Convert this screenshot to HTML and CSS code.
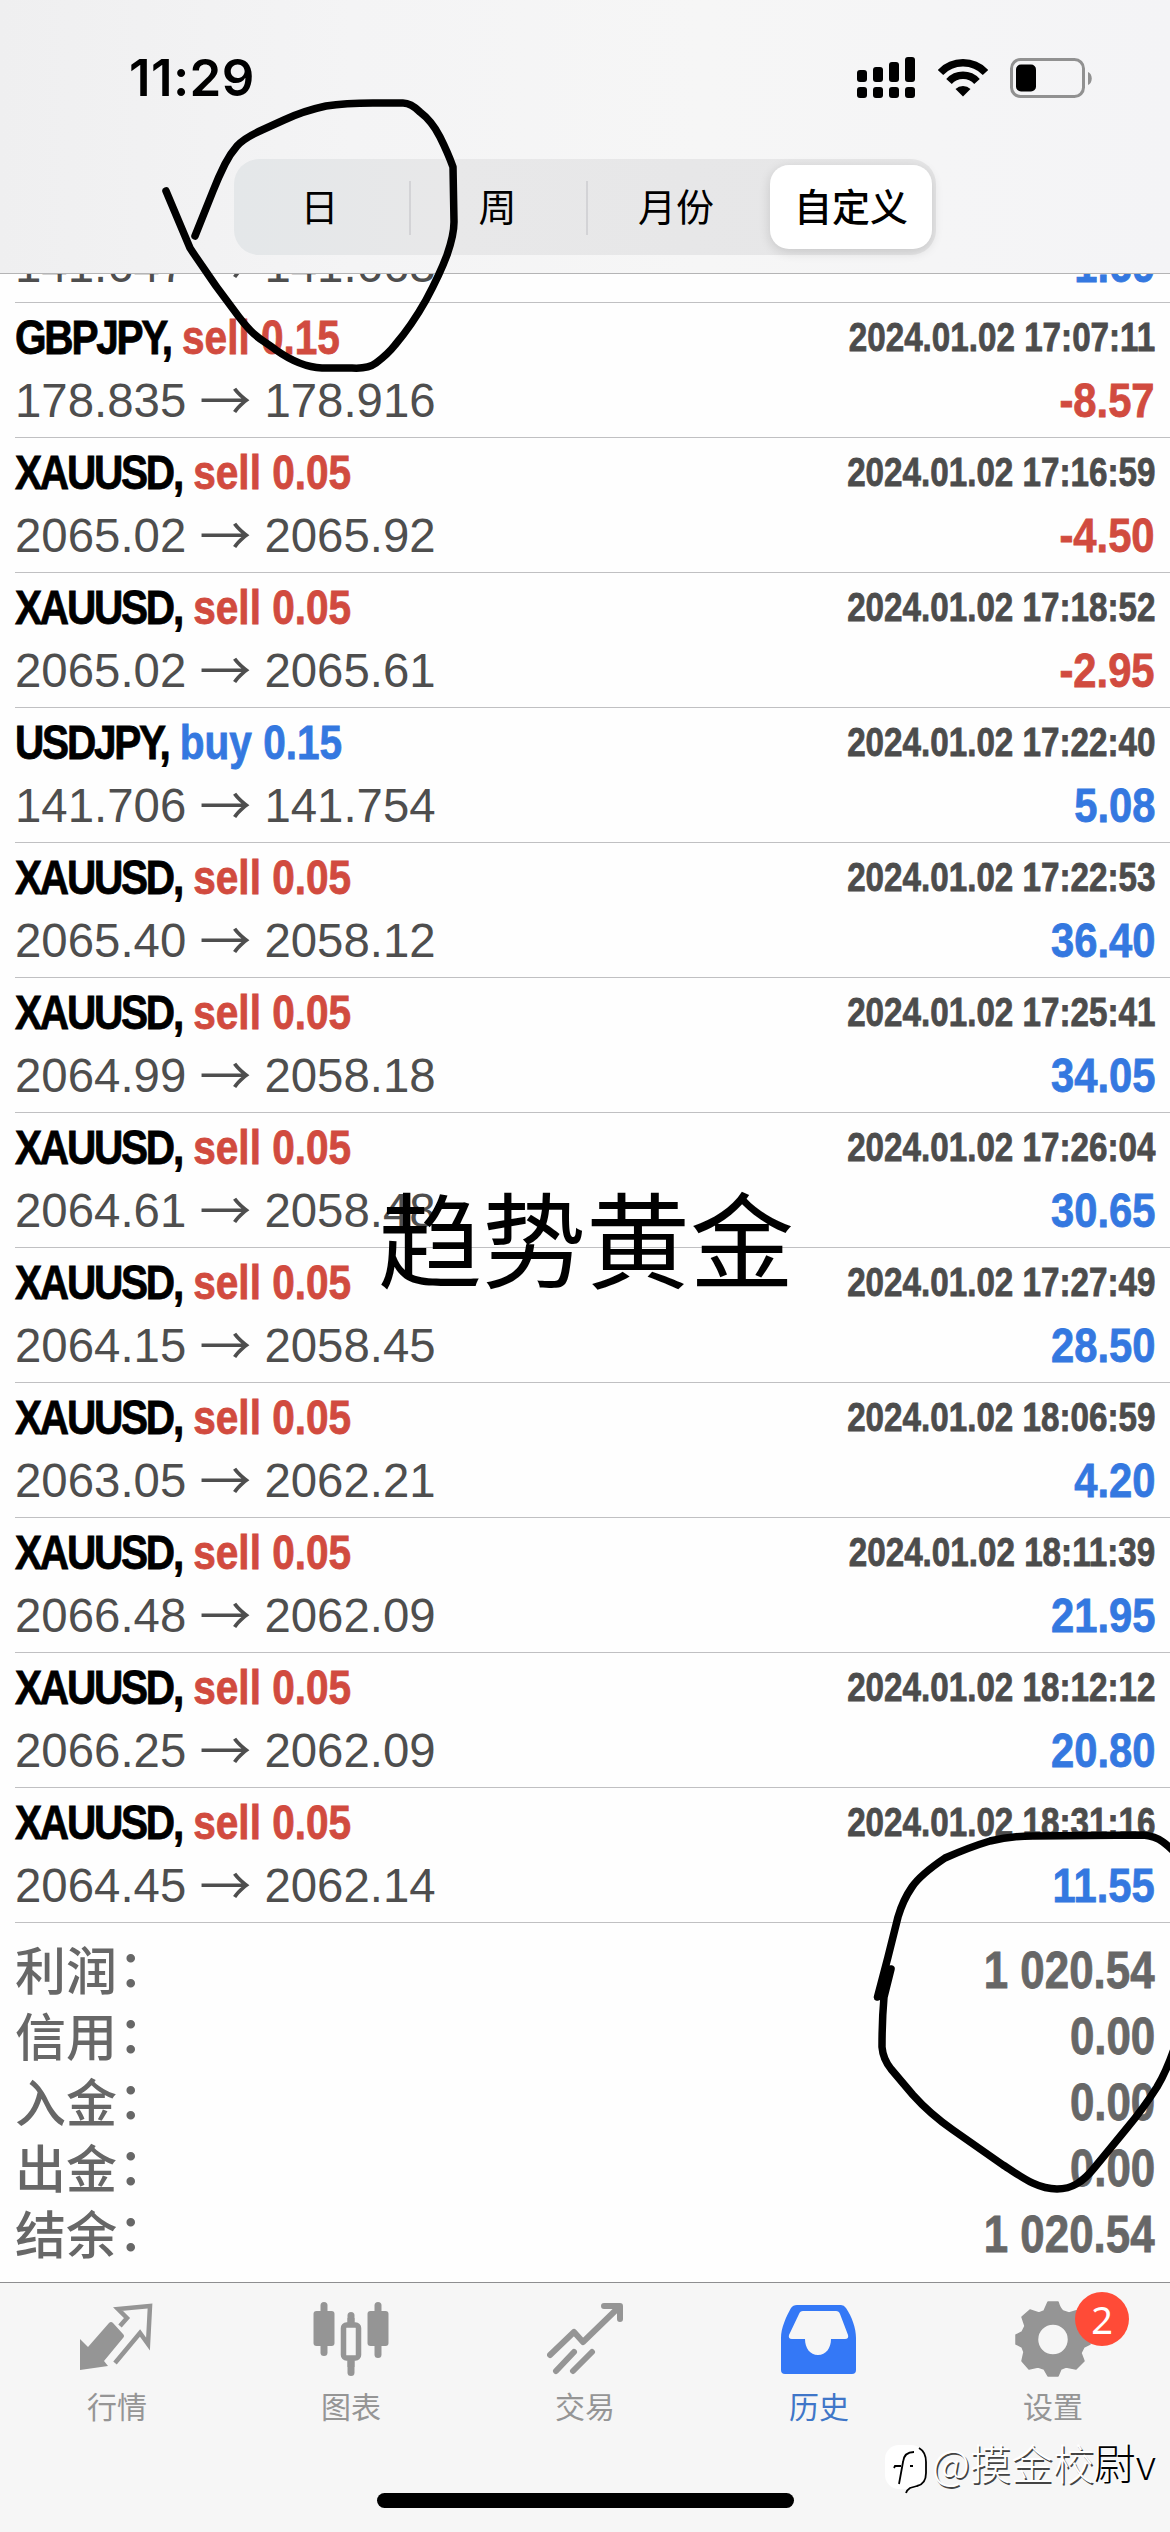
FILE: index.html
```html
<!DOCTYPE html>
<html lang="zh-CN">
<head>
<meta charset="utf-8">
<title>历史</title>
<link rel="stylesheet" href="styles.css">
</head>
<body>
<div class="screen">
  <header class="header">
    <div class="status">
      <span class="clock">11:29</span>
      <div class="status-icons">
        <svg class="signal" width="58" height="42" viewBox="0 0 58 42">
          <rect x="0" y="13" width="10" height="12" rx="3"/><rect x="16" y="10" width="10" height="15" rx="3"/><rect x="32" y="5" width="10" height="20" rx="3"/><rect x="48" y="0" width="10" height="25" rx="3"/>
          <rect x="0" y="30" width="10" height="11" rx="3"/><rect x="16" y="30" width="10" height="11" rx="3"/><rect x="32" y="30" width="10" height="11" rx="3"/><rect x="48" y="30" width="10" height="11" rx="3"/>
        </svg>
        <svg class="wifi" width="50" height="38" viewBox="0 0 50 38">
          <path d="M2.500 13.500A31 31 0 0 1 47.500 13.500M11 22.500A19 19 0 0 1 39 22.500" fill="none" stroke="#000" stroke-width="7.500"/>
          <path d="M25 37.500L17.500 30A11 11 0 0 1 32.500 30Z"/>
        </svg>
        <svg class="battery" width="82" height="40" viewBox="0 0 82 40">
          <rect x="1.500" y="1.500" width="72" height="37" rx="9" fill="none" stroke="#919191" stroke-width="3"/>
          <rect x="6" y="6.500" width="20" height="27" rx="5"/>
          <path d="M78 14c5 2 5 11 0 13z" fill="#919191"/>
        </svg>
      </div>
    </div>
    <nav class="segments">
      <span class="segment">日</span>
      <span class="segment ruled">周</span>
      <span class="segment ruled">月份</span>
      <span class="segment selected">自定义</span>
    </nav>
  </header>

  <main class="history">
    <ul class="deals">
      <li class="deal"><p class="deal-top"><span class="narrow"><b class="symbol">USDJPY,</b> <b class="buy">buy 0.15</b></span><time class="narrow time">2024.01.02 17:05:22</time></p><p class="deal-bottom"><span class="prices">141.647 <i class="arrow">→</i> 141.663</span><b class="narrow profit buy">1.69</b></p></li>
      <li class="deal"><p class="deal-top"><span class="narrow"><b class="symbol">GBPJPY,</b> <b class="sell">sell 0.15</b></span><time class="narrow time">2024.01.02 17:07:11</time></p><p class="deal-bottom"><span class="prices">178.835 <i class="arrow">→</i> 178.916</span><b class="narrow profit sell">-8.57</b></p></li>
      <li class="deal"><p class="deal-top"><span class="narrow"><b class="symbol">XAUUSD,</b> <b class="sell">sell 0.05</b></span><time class="narrow time">2024.01.02 17:16:59</time></p><p class="deal-bottom"><span class="prices">2065.02 <i class="arrow">→</i> 2065.92</span><b class="narrow profit sell">-4.50</b></p></li>
      <li class="deal"><p class="deal-top"><span class="narrow"><b class="symbol">XAUUSD,</b> <b class="sell">sell 0.05</b></span><time class="narrow time">2024.01.02 17:18:52</time></p><p class="deal-bottom"><span class="prices">2065.02 <i class="arrow">→</i> 2065.61</span><b class="narrow profit sell">-2.95</b></p></li>
      <li class="deal"><p class="deal-top"><span class="narrow"><b class="symbol">USDJPY,</b> <b class="buy">buy 0.15</b></span><time class="narrow time">2024.01.02 17:22:40</time></p><p class="deal-bottom"><span class="prices">141.706 <i class="arrow">→</i> 141.754</span><b class="narrow profit buy">5.08</b></p></li>
      <li class="deal"><p class="deal-top"><span class="narrow"><b class="symbol">XAUUSD,</b> <b class="sell">sell 0.05</b></span><time class="narrow time">2024.01.02 17:22:53</time></p><p class="deal-bottom"><span class="prices">2065.40 <i class="arrow">→</i> 2058.12</span><b class="narrow profit buy">36.40</b></p></li>
      <li class="deal"><p class="deal-top"><span class="narrow"><b class="symbol">XAUUSD,</b> <b class="sell">sell 0.05</b></span><time class="narrow time">2024.01.02 17:25:41</time></p><p class="deal-bottom"><span class="prices">2064.99 <i class="arrow">→</i> 2058.18</span><b class="narrow profit buy">34.05</b></p></li>
      <li class="deal"><p class="deal-top"><span class="narrow"><b class="symbol">XAUUSD,</b> <b class="sell">sell 0.05</b></span><time class="narrow time">2024.01.02 17:26:04</time></p><p class="deal-bottom"><span class="prices">2064.61 <i class="arrow">→</i> 2058.48</span><b class="narrow profit buy">30.65</b></p></li>
      <li class="deal"><p class="deal-top"><span class="narrow"><b class="symbol">XAUUSD,</b> <b class="sell">sell 0.05</b></span><time class="narrow time">2024.01.02 17:27:49</time></p><p class="deal-bottom"><span class="prices">2064.15 <i class="arrow">→</i> 2058.45</span><b class="narrow profit buy">28.50</b></p></li>
      <li class="deal"><p class="deal-top"><span class="narrow"><b class="symbol">XAUUSD,</b> <b class="sell">sell 0.05</b></span><time class="narrow time">2024.01.02 18:06:59</time></p><p class="deal-bottom"><span class="prices">2063.05 <i class="arrow">→</i> 2062.21</span><b class="narrow profit buy">4.20</b></p></li>
      <li class="deal"><p class="deal-top"><span class="narrow"><b class="symbol">XAUUSD,</b> <b class="sell">sell 0.05</b></span><time class="narrow time">2024.01.02 18:11:39</time></p><p class="deal-bottom"><span class="prices">2066.48 <i class="arrow">→</i> 2062.09</span><b class="narrow profit buy">21.95</b></p></li>
      <li class="deal"><p class="deal-top"><span class="narrow"><b class="symbol">XAUUSD,</b> <b class="sell">sell 0.05</b></span><time class="narrow time">2024.01.02 18:12:12</time></p><p class="deal-bottom"><span class="prices">2066.25 <i class="arrow">→</i> 2062.09</span><b class="narrow profit buy">20.80</b></p></li>
      <li class="deal"><p class="deal-top"><span class="narrow"><b class="symbol">XAUUSD,</b> <b class="sell">sell 0.05</b></span><time class="narrow time">2024.01.02 18:31:16</time></p><p class="deal-bottom"><span class="prices">2064.45 <i class="arrow">→</i> 2062.14</span><b class="narrow profit buy">11.55</b></p></li>
    </ul>
    <dl class="totals">
      <div class="total"><dt>利润<span>：</span></dt><dd class="narrow">1 020.54</dd></div>
      <div class="total"><dt>信用<span>：</span></dt><dd class="narrow">0.00</dd></div>
      <div class="total"><dt>入金<span>：</span></dt><dd class="narrow">0.00</dd></div>
      <div class="total"><dt>出金<span>：</span></dt><dd class="narrow">0.00</dd></div>
      <div class="total"><dt>结余<span>：</span></dt><dd class="narrow">1 020.54</dd></div>
    </dl>
  </main>

  <footer class="footer">
    <nav class="tabs">
      <a class="tab">
        <svg width="76" height="76" viewBox="0 0 76 76">
          <path d="M1 38L9 46L30 22Q32 20 34 22L44 33Q46 35 44 37L25 60L29 65L1 69Z" fill="#959595"/>
          <path d="M41 25L48 17L39 8L71 5L69 43L61 32L36 62" fill="none" stroke="#959595" stroke-width="4.500"/>
        </svg>
        <span>行情</span>
      </a>
      <a class="tab">
        <svg width="76" height="76" viewBox="0 0 76 76">
          <g fill="#959595"><rect x="0.500" y="10" width="21" height="35" rx="3"/><rect x="54.500" y="10" width="21" height="35" rx="3"/><rect x="7.500" y="1" width="7" height="54" rx="3.500"/><rect x="61.500" y="1" width="7" height="56" rx="3.500"/><rect x="34.500" y="11" width="7" height="13" rx="3.500"/><rect x="34.500" y="57" width="7" height="18" rx="3.500"/><rect x="34.500" y="17" width="7" height="6"/><rect x="34.500" y="58" width="7" height="8"/></g>
          <rect x="30.500" y="24" width="15" height="33" rx="3" fill="none" stroke="#959595" stroke-width="5.500"/>
        </svg>
        <span>图表</span>
      </a>
      <a class="tab">
        <svg width="76" height="76" viewBox="0 0 76 76">
          <path d="M3 54L27 31L36 41L70 8M57 5H73V18M9 70L27 51M26 70L45 51" fill="none" stroke="#959595" stroke-width="6" stroke-linecap="round" stroke-linejoin="round"/>
        </svg>
        <span>交易</span>
      </a>
      <a class="tab active">
        <svg width="76" height="76" viewBox="0 0 76 76">
          <path fill="#3478f6" fill-rule="evenodd" d="M16 4H60Q63 4 65 7C71 16 75 27 75 37V69Q75 73 71 73H4Q0 73 0 69V37C0 27 5 16 10 7Q12 4 16 4ZM22 10Q19 10 18 13L8 34Q7 38 11 38H24C24 47 29 54 37 54C45 54 50 47 50 38H64Q68 38 67 34L59 13Q58 10 55 10Z"/>
        </svg>
        <span>历史</span>
      </a>
      <a class="tab">
        <svg width="76" height="76" viewBox="0 0 76 76">
          <path fill="#959595" stroke="#959595" stroke-width="1.500" stroke-linejoin="round" fill-rule="evenodd" d="M33 1H43Q45 8 48 10L54 12L64 9L71 17L67 28L69 33L75 35V43L69 46L66 52L69 60L61 68L51 66L46 68L43 75H33L29 68L23 66L14 68L7 60L9 51L7 46L1 43V34L7 31L10 25L7 16L15 9L24 12L29 10ZM38 23A15.500 15.500 0 1 0 38 54A15.500 15.500 0 1 0 38 23Z"/>
        </svg>
        <span>设置</span>
        <em class="badge">2</em>
      </a>
    </nav>
    <div class="home-bar"></div>
  </footer>

  <svg class="ink" width="1170" height="2532" viewBox="0 0 1170 2532">
    <path d="M166 191L190 248C205 271 222 295 239 317S260 338 276 350Q300 367 322 368H352Q368 369 376 363Q388 354 395 345Q412 325 426 300Q440 274 447 255Q454 235 454 222L453 167Q448 153 440 137T420 112Q411 103 403 103H373Q345 103 326 106Q303 111 284 120L262 130Q244 138 237 146T225 164Q218 178 213 191L195 236"/>
    <path d="M877.500 1997L888 1957L898 1917Q903 1900 912 1887Q920 1875 945 1858Q970 1847 990 1841Q1010 1836 1033 1836L1143 1835Q1155 1836 1163 1842T1180 1858M1180 2030Q1170 2065 1157 2087Q1143 2109 1127 2128L1095 2167C1083 2182 1072 2189 1057 2189C1035 2189 1018 2174 1003 2165L953 2130Q930 2114 913 2095L891 2069Q883 2059 882 2047Q882 2020 884 1997L891 1969M881 1996L889 1969"/>
  </svg>
  <div class="caption">趋势黄金</div>
  <div class="watermark">
    <svg width="44" height="54" viewBox="0 0 44 54">
      <rect x="0" y="2" width="40" height="44" rx="14" fill="#fff"/>
      <path d="M34 5Q41 9 41 19V30Q41 41 32 43L25 45Q22 47 21 50" fill="none" stroke="#000" stroke-width="1.800"/>
      <path d="M29 9Q19 9 18 19L14 41M9 25L10 23H16M25 23H28" fill="none" stroke="#000" stroke-width="1.800"/>
    </svg>
    <span>@摸金校<b>尉v</b></span>
  </div>
</div>
</body>
</html>
```

FILE: styles.css
```css
* { box-sizing: border-box; margin: 0; padding: 0; }
body { width: 1170px; background: #fff; font-family: "Liberation Sans", "Noto Sans CJK SC", sans-serif; }
.screen { position: relative; width: 1170px; height: 2532px; overflow: hidden; display: flex; flex-direction: column; background: #fefefe; }

.header { flex: none; height: 274px; border-bottom: 1px solid #b4b4b5; background: linear-gradient(90deg, #efeff0, #f4f4f5 30%, #f6f6f6 60%, #f4f4f6); }
.status { height: 159px; display: flex; justify-content: space-between; padding: 49px 78px 0 129px; }
.clock { font: 600 51px/58px Inter, sans-serif; letter-spacing: 0.4px; }
.status-icons { display: flex; align-items: flex-start; padding-top: 8px; }
.wifi { margin: 2px 22px 0 23px; }
.battery { margin-top: 1px; }

.segments { width: 702px; height: 96px; margin: 0 auto 0 234px; padding: 6px 4px 6px 0; display: grid; grid-template-columns: 175px 177px 184px 162px; border-radius: 25px; background: linear-gradient(90deg, #e4e7e9, #e8e8e9 30%, #e6e6e7); }
.segment { position: relative; display: flex; align-items: center; justify-content: center; padding-bottom: 5px; font: 400 38px/1 "Noto Sans CJK SC", sans-serif; }
.segment:first-child { padding-right: 4px; }
.segment:nth-child(3) { padding-right: 4px; }
.ruled::before { content: ""; position: absolute; left: 0; top: 16px; width: 2px; height: 54px; background: #d3d3d6; }
.selected { border-radius: 19px; background: #fff; font-weight: 500; box-shadow: 0 3px 12px rgba(0, 0, 0, .14); }

.history { flex: none; height: 2008px; overflow: hidden; }
.deals { list-style: none; margin-top: -106px; }
.deal { height: 135px; margin-left: 15px; padding: 7px 15px 0 0; border-bottom: 1px solid #c0c0c2; }
.deal-top, .deal-bottom { display: flex; justify-content: space-between; white-space: nowrap; }
.deal-top { height: 63px; line-height: 54px; font-size: 49px; }
.deal-bottom { height: 62px; line-height: 54px; font-size: 48.500px; }
.narrow { display: inline-block; font-weight: 700; transform: scaleX(.828); transform-origin: left; -webkit-text-stroke: .8px currentColor; }
.symbol { letter-spacing: -2.700px; color: #000; }
.sell { color: #d14b3f; }
.buy { color: #3478e0; }
.time { font-size: 40px; color: #4c4c4c; transform: scaleX(.83); transform-origin: right; }
.profit { transform: scaleX(.86); transform-origin: right; }
.prices { display: inline-block; height: 54px; color: #4e4e4e; transform: scaleX(.977); transform-origin: left; }
.arrow { position: relative; top: 4px; font: 400 53px/0 "Noto Sans CJK SC", sans-serif; }

.totals { padding: 15px 15px 0 15px; color: #676767; }
.total { height: 66px; display: flex; justify-content: space-between; line-height: 66px; }
.total dt { margin-top: -3px; font: 500 51px/66px "Noto Sans CJK SC", sans-serif; }
.total dt span { position: relative; left: 1px; top: -3px; }
.total dd { font-size: 51px; transform: scaleX(.86); transform-origin: right; }

.footer { flex: none; height: 250px; border-top: 1px solid #8e8e90; background: #f6f6f6; }
.tabs { height: 210px; display: grid; grid-template-columns: repeat(5, 1fr); }
.tab { position: relative; display: flex; flex-direction: column; align-items: center; padding-top: 18px; font: 400 30px/44px "Noto Sans CJK SC", sans-serif; color: #959595; }
.tab span { margin-top: 6px; }
.active { color: #3f76c8; }
.badge { position: absolute; left: 139px; top: 9px; width: 54px; height: 54px; border-radius: 50%; background: #ff4b37; color: #fff; font: 400 38px/54px "Noto Sans", sans-serif; text-align: center; }
.home-bar { width: 417px; height: 15px; margin: 0 auto; border-radius: 8px; background: #000; }

.ink { position: absolute; inset: 0; fill: none; stroke: #000; stroke-width: 7.500; stroke-linecap: round; stroke-linejoin: round; }
.caption { position: absolute; left: 378px; top: 1174px; font: 400 104px/124px "Noto Sans CJK SC", sans-serif; color: #000; white-space: nowrap; }
.watermark { position: absolute; left: 885px; top: 2443px; display: flex; gap: 3px; color: #fff; font: 300 41.500px/50px "Noto Sans CJK SC", sans-serif; text-shadow: 1.500px 1.500px 0 #444; white-space: nowrap; }
.watermark span { margin-top: -6px; }
.watermark b { font-weight: 300; color: #000; text-shadow: -1.500px -1px 0 #fff; }
```
